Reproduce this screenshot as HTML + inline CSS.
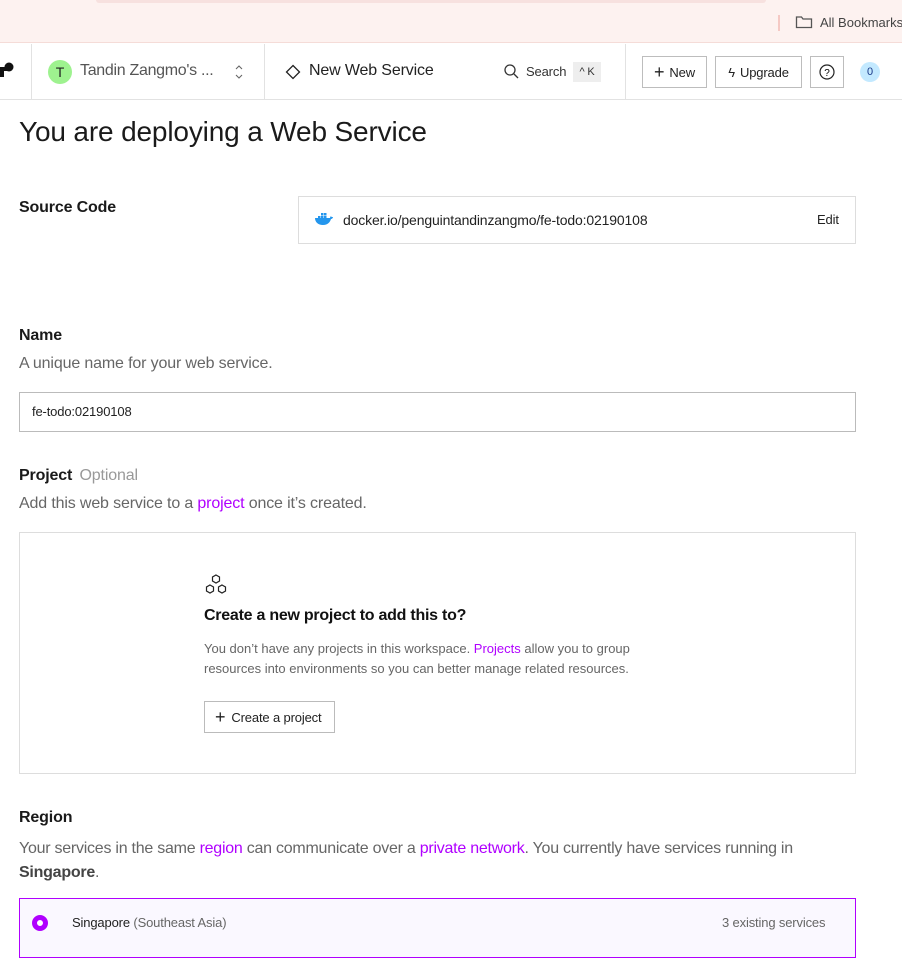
<!DOCTYPE html>
<html><head><style>
*{box-sizing:border-box;margin:0;padding:0}
body{width:902px;height:945px;overflow:hidden;background:#fff;font-family:"Liberation Sans",sans-serif;color:#1a1a1a;position:relative;letter-spacing:-0.15px}
.a{position:absolute;white-space:nowrap}
.purple{color:#b000ff}
.btn{position:absolute;border:1px solid #bdbdbd;height:32px;top:56px;font-size:13px;display:flex;align-items:center;justify-content:center;color:#222}
.g{color:#666}
</style></head><body>
<div class="a" style="left:0;top:0;width:902px;height:43px;background:#fdf2f0;border-bottom:1px solid #f5dcd8"></div>
<div class="a" style="left:96px;top:0;width:670px;height:3px;background:#f7e1df;border-radius:0 0 8px 8px"></div>
<div class="a" style="left:778px;top:15px;width:2px;height:16px;background:#f5c9c4"></div>
<svg class="a" style="left:795px;top:15px" width="18" height="14" viewBox="0 0 18 14"><path d="M1.5 2h5l1.5 2h8.5v8.5h-15z" fill="none" stroke="#555" stroke-width="1.3"/></svg>
<div class="a" style="left:820px;top:15px;font-size:13px;color:#444;letter-spacing:0">All Bookmarks</div>

<div class="a" style="left:0;top:99px;width:902px;height:1px;background:#e2e2e2"></div>
<div class="a" style="left:31px;top:44px;width:1px;height:55px;background:#e2e2e2"></div>
<div class="a" style="left:264px;top:44px;width:1px;height:55px;background:#e2e2e2"></div>
<div class="a" style="left:625px;top:44px;width:1px;height:55px;background:#e2e2e2"></div>
<svg class="a" style="left:0;top:62px" width="14" height="16"><circle cx="9" cy="5" r="4.5" fill="#111"/><rect x="0" y="5" width="4" height="10" fill="#111"/><rect x="0" y="5" width="9" height="4" fill="#111"/></svg>
<div class="a" style="left:48px;top:60px;width:24px;height:24px;border-radius:50%;background:#9ef28f;font-size:14px;text-align:center;line-height:24px;color:#222">T</div>
<div class="a g" style="left:80px;top:62px;font-size:16px;color:#555;letter-spacing:-0.3px">Tandin Zangmo's ...</div>
<svg class="a" style="left:234px;top:64px" width="10" height="16" fill="none" stroke="#666" stroke-width="1.1"><path d="M2 5l3-3 3 3M2 11l3 3 3-3"/></svg>
<svg class="a" style="left:285px;top:64px" width="16" height="16"><path d="M8 1.5 14.5 8 8 14.5 1.5 8z" fill="none" stroke="#222" stroke-width="1.3"/></svg>
<div class="a" style="left:309px;top:62px;font-size:16px;color:#222">New Web Service</div>
<svg class="a" style="left:504px;top:64px" width="15" height="15"><circle cx="6" cy="6" r="5" fill="none" stroke="#333" stroke-width="1.3"/><path d="M10 10l4 4" stroke="#333" stroke-width="1.3"/></svg>
<div class="a" style="left:526px;top:64px;font-size:13px;color:#333">Search</div>
<div class="a" style="left:573px;top:62px;width:28px;height:20px;background:#eee;font-size:11px;text-align:center;line-height:20px;color:#333">^ K</div>
<div class="btn" style="left:642px;width:65px"><span style="font-size:18px;margin-right:5px;font-weight:300">+</span>New</div>
<div class="btn" style="left:715px;width:87px"><span style="margin-right:5px">ϟ</span>Upgrade</div>
<div class="btn" style="left:810px;width:34px"><svg width="16" height="16"><circle cx="8" cy="8" r="7" fill="none" stroke="#222" stroke-width="1.2"/><text x="8" y="12" font-size="10" text-anchor="middle" font-family="Liberation Sans">?</text></svg></div>
<div class="a" style="left:860px;top:62px;width:20px;height:20px;border-radius:50%;background:#c3e9ff;color:#1a3a8a;font-size:11px;text-align:center;line-height:20px">0</div>

<div class="a" style="left:19px;top:116px;font-size:28px;color:#1a1a1a;letter-spacing:-0.15px">You are deploying a Web Service</div>
<div class="a" style="left:19px;top:199px;font-size:16px;font-weight:bold">Source Code</div>
<div class="a" style="left:298px;top:196px;width:558px;height:48px;border:1px solid #ddd"></div>
<svg class="a" style="left:315px;top:212px" width="18" height="14"><path d="M0 7h16c1 0 2-1 2-2-1 0-2 0-2-1-1 1-1 2-1 2H0c0 4 3 7 8 7s7-3 8-6z" fill="#2496ed"/><rect x="3" y="4" width="2.5" height="2.5" fill="#2496ed"/><rect x="6" y="4" width="2.5" height="2.5" fill="#2496ed"/><rect x="9" y="4" width="2.5" height="2.5" fill="#2496ed"/><rect x="6" y="1" width="2.5" height="2.5" fill="#2496ed"/><rect x="9" y="1" width="2.5" height="2.5" fill="#2496ed"/></svg>
<div class="a" style="left:343px;top:212px;font-size:14px;color:#222">docker.io/penguintandinzangmo/fe-todo:02190108</div>
<div class="a" style="left:817px;top:212px;font-size:13px;color:#222">Edit</div>

<div class="a" style="left:19px;top:327px;font-size:16px;font-weight:bold">Name</div>
<div class="a g" style="left:19px;top:355px;font-size:16px">A unique name for your web service.</div>
<div class="a" style="left:19px;top:392px;width:837px;height:40px;border:1px solid #bbb;font-size:13px;padding:11px 12px;color:#222">fe-todo:02190108</div>

<div class="a" style="left:19px;top:467px;font-size:16px"><b>Project</b> <span style="color:#999;margin-left:3px">Optional</span></div>
<div class="a g" style="left:19px;top:495px;font-size:16px">Add this web service to a <span class="purple">project</span> once it’s created.</div>
<div class="a" style="left:19px;top:532px;width:837px;height:242px;border:1px solid #ddd"></div>
<svg class="a" style="left:204px;top:574px" width="24" height="22" fill="none" stroke="#222" stroke-width="1.2"><path d="M12 1l3.5 2v4L12 9 8.5 7V3z"/><path d="M6 11l3.5 2v4L6 19l-3.5-2v-4z"/><path d="M18 11l3.5 2v4L18 19l-3.5-2v-4z"/></svg>
<div class="a" style="left:204px;top:607px;font-size:16px;font-weight:bold;color:#111;letter-spacing:-0.25px">Create a new project to add this to?</div>
<div class="a g" style="left:204px;top:639px;font-size:13px;line-height:20px;letter-spacing:0">You don’t have any projects in this workspace. <span class="purple">Projects</span> allow you to group<br>resources into environments so you can better manage related resources.</div>
<div class="a" style="left:204px;top:701px;width:131px;height:32px;border:1px solid #bbb;font-size:13px;display:flex;align-items:center;padding-left:10px;color:#222"><span style="font-size:18px;font-weight:300;margin-right:6px">+</span>Create a project</div>

<div class="a" style="left:19px;top:809px;font-size:16px;font-weight:bold">Region</div>
<div class="a g" style="left:19px;top:837px;font-size:16px;line-height:24px;letter-spacing:-0.25px">Your services in the same <span class="purple">region</span> can communicate over a <span class="purple">private network</span>. You currently have services running in<br><b style="color:#444">Singapore</b>.</div>
<div class="a" style="left:19px;top:898px;width:837px;height:60px;border:1px solid #b000ff;background:#faf8ff"></div>
<div class="a" style="left:32px;top:915px;width:16px;height:16px;border-radius:50%;border:5px solid #b000ff;background:#fff"></div>
<div class="a" style="left:72px;top:915px;font-size:13px;color:#222">Singapore <span class="g">(Southeast Asia)</span></div>
<div class="a g" style="left:722px;top:915px;font-size:13px">3 existing services</div>
</body></html>
